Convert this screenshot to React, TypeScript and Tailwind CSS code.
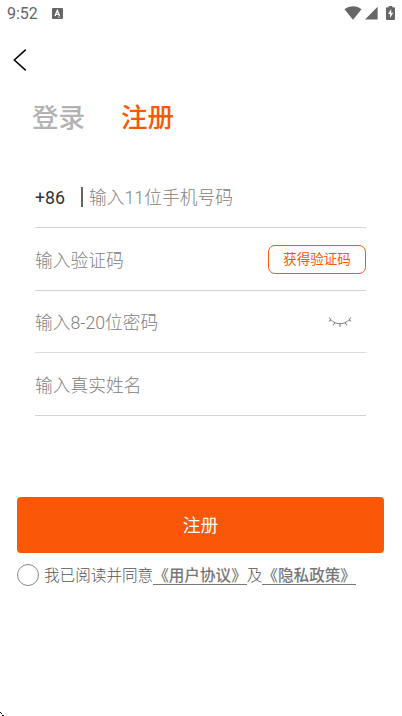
import { useState } from 'react';

function StatusBar() {
    return (
        <div className="flex h-7 items-center pl-[7px] pr-[7px] text-[#666666]">
            <span className="w-[45px] text-[16px] leading-7">9:52</span>
            <svg className="-mt-px" width="11" height="11" viewBox="0 0 11 11">
                <rect width="11" height="11" rx="1" fill="#666666" />
                <path d="M3 8L5.3 2.5L7.6 8M3.8 6.3H6.8" fill="none" stroke="#fff" strokeWidth="1.3" />
                <path d="M6 9.2H9" stroke="#fff" strokeWidth="0.8" strokeDasharray="1 0.6" />
            </svg>
            <div className="-mt-0.5 ml-auto flex items-center">
                {/* Wifi */}
                <svg width="18" height="14" viewBox="0 0 18 14">
                    <path d="M0.5 3.2C5.5 -0.8 12.5 -0.8 17.5 3.2L9 13.7Z" fill="#666666" />
                </svg>
                {/* Signal */}
                <svg className="ml-[3px]" width="13" height="14" viewBox="0 0 13 14">
                    <path d="M12.6 0.8V13.6H0Z" fill="#666666" />
                </svg>
                {/* Battery */}
                <svg className="ml-2" width="9" height="14" viewBox="0 0 9 14">
                    <path d="M2.7 0H6.3V1.3H8Q9 1.3 9 2.3V13Q9 14 8 14H1Q0 14 0 13V2.3Q0 1.3 1 1.3H2.7Z" fill="#666666" />
                    <path d="M5.2 3L2 8H4V12L7.2 6.8H5.2Z" fill="#fff" />
                </svg>
            </div>
        </div>
    );
}

function ClosedEye() {
    return (
        <svg width="24" height="12" viewBox="0 0 24 12" fill="none" stroke="#777777" strokeWidth="1">
            <path d="M1.2 1.5C6 9.8 18 9.8 22.8 1.5" />
            <path d="M3 4L0.8 5.4M6.8 6.8L5.2 9.3M12 7.8V11M17.2 6.8L18.8 9.3M21 4L23.2 5.4" />
        </svg>
    );
}

export default function App() {
    const [agreed, setAgreed] = useState(false);

    return (
        <div className="relative h-[716px] w-[402px] overflow-hidden bg-white font-[Roboto,'Noto_Sans_CJK_SC',sans-serif]">
            <StatusBar />

            <header className="flex h-16 items-center pl-[13px]">
                <button aria-label="返回">
                    <svg width="14" height="22" viewBox="0 0 14 22" fill="none" stroke="#000" strokeWidth="1.5">
                        <path d="M12.8 0.6L1.3 11L12.8 21.4" />
                    </svg>
                </button>
            </header>

            <nav className="flex h-[50px] items-center gap-[36px] pl-8 pt-0.5 text-[26.5px] font-medium leading-[50px]">
                <button className="text-[#b3b3b3]">登录</button>
                <button className="text-[#fa5807]">注册</button>
            </nav>

            <form className="mx-[35px] mt-[23px] w-[331px] text-[17.75px] font-light text-[#808080]">
                <div className="flex h-[63px] items-center border-b border-[#d3d3d3]">
                    <span className="w-[46px] pt-1 font-normal text-[#333333]">+86</span>
                    <span className="mr-[6px] mt-0.5 h-5 w-[2px] bg-[#666666]" />
                    <span className="pt-1">输入11位手机号码</span>
                </div>
                <div className="flex h-[63px] items-center justify-between border-b border-[#d3d3d3]">
                    <span className="pt-1">输入验证码</span>
                    <button type="button" className="h-[29px] w-[98px] rounded-[7px] border border-[#fa5807] pt-px text-[13.5px] font-normal text-[#fa5807]">
                        获得验证码
                    </button>
                </div>
                <div className="flex h-[62px] items-center justify-between border-b border-[#dcdcdc] pr-[14px]">
                    <span className="pt-1">输入8-20位密码</span>
                    <ClosedEye />
                </div>
                <div className="flex h-[63px] items-center border-b border-[#d3d3d3]">
                    <span className="pt-1">输入真实姓名</span>
                </div>
            </form>

            <button className="ml-[17px] mt-[81px] block h-14 w-[367px] rounded-[4px] bg-[#fa5807] pt-0.5 text-[17.7px] text-white">
                注册
            </button>

            <div className="ml-[17px] mt-[10px] flex h-6 items-center text-[15.6px] text-[#777777]">
                <button
                    aria-label="同意"
                    onClick={() => setAgreed(!agreed)}
                    className={`mr-[5px] size-[22px] rounded-full border border-[#888888] ${agreed ? 'bg-[#fa5807]' : 'bg-white'}`}
                />
                <span className="pt-[3px] font-light text-[#555555]">我已阅读并同意</span>
                <span className="h-5 border-b border-[#777777] font-medium leading-[22px]">《用户协议》</span>
                <span className="pt-[3px] font-light text-[#555555]">及</span>
                <span className="h-5 border-b border-[#777777] font-medium leading-[22px]">《隐私政策》</span>
            </div>

            {/* Corner mark at the bottom edge of the screen */}
            <svg className="absolute bottom-0 left-0" width="4" height="4" viewBox="0 0 4 4">
                <path d="M0 0.5H1M1 1.5H2M2 3.5H4" stroke="#111" />
            </svg>
        </div>
    );
}
